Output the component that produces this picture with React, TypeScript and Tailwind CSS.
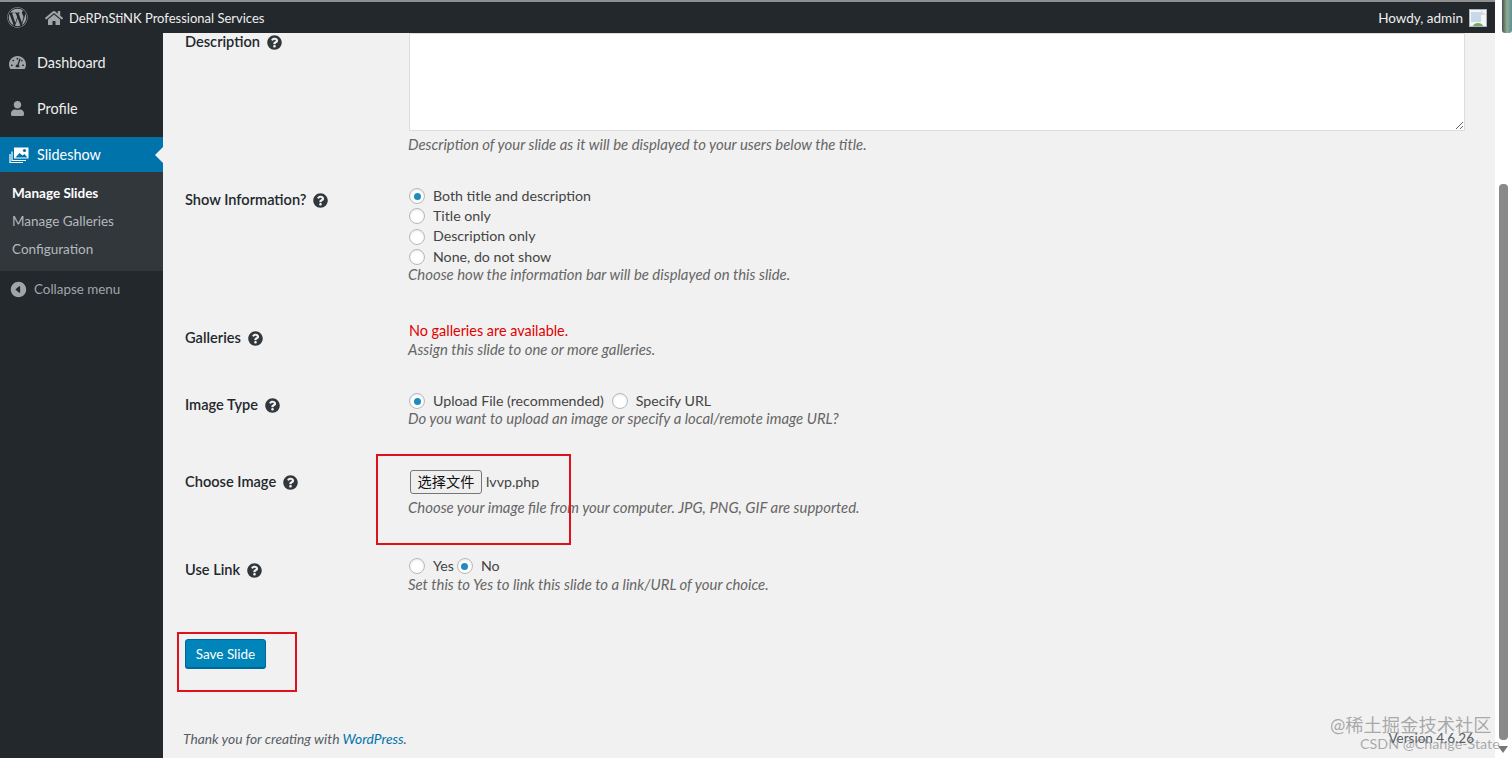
import type { ReactNode } from 'react';
import { FaHome, FaQuestionCircle, FaTachometerAlt, FaUser, FaWordpress } from 'react-icons/fa';
import { IoCaretBackCircle } from 'react-icons/io5';

const font = "font-['Lato','Noto_Sans_CJK_SC',sans-serif]";

function Help() {
  return <FaQuestionCircle className="ml-[7px] h-[15px] w-[15px] text-[#32373c]" />;
}

function Radio({ checked, label }: { checked?: boolean; label: string }) {
  return (
    <span className="flex h-[20.3px] items-center">
      <span className="flex h-4 w-4 items-center justify-center rounded-full border border-[#b4b9be] bg-white shadow-[inset_0_1px_2px_rgba(0,0,0,0.1)]">
        {checked && <span className="h-[7px] w-[7px] rounded-full bg-[#1e8cbe]" />}
      </span>
      <span className="ml-2 pb-px text-[#444]">{label}</span>
    </span>
  );
}

function Hint({ children }: { children: ReactNode }) {
  return <p className="-ml-px h-5 text-[14.9px] leading-5 italic text-[#666]">{children}</p>;
}

function Row({ label, top, labelTop, children }: { label: string; top: string; labelTop: string; children: ReactNode }) {
  return (
    <div className={`grid grid-cols-[224px_1fr] ${top}`}>
      <div className={`flex items-center text-[14.6px] font-semibold text-[#23282d] ${labelTop}`}>
        {label}
        <Help />
      </div>
      <div>{children}</div>
    </div>
  );
}

function SlidesIcon() {
  return (
    <svg className="h-[20px] w-[20px]" viewBox="0 0 20 20" fill="none">
      <path d="M1 9v8.500h13" stroke="#fff" strokeWidth="1.2" />
      <path d="M3 6.500V15.500h14" stroke="#fff" strokeWidth="1.2" />
      <path d="M5 2.500h14.500v11H5z" fill="#fff" />
      <path d="M6.500 12.500l4-4.500 3 2.500 2-1.500 3 3.500z" fill="#0073aa" />
      <circle cx="15.500" cy="5.500" r="1.600" fill="#0073aa" />
    </svg>
  );
}

function Sidebar() {
  return (
    <aside className="flex w-[163px] shrink-0 flex-col bg-[#23282d] text-[14.4px] text-[#eee]">
      <div className="flex h-[46px] items-center pl-[9px] pt-[13px]">
        <FaTachometerAlt className="h-[17px] w-[17px] text-[#a0a5aa]" />
        <span className="ml-[11px]">Dashboard</span>
      </div>
      <div className="flex h-[46px] items-center pl-[10px] pt-[13px]">
        <FaUser className="h-[15px] w-[15px] text-[#a0a5aa]" />
        <span className="ml-3">Profile</span>
      </div>
      <div className="relative mt-[12px] flex h-[35px] items-center bg-[#0073aa] pl-[9px] text-white">
        <SlidesIcon />
        <span className="ml-[8px]">Slideshow</span>
        <span className="absolute right-0 top-[10px] h-0 w-0 border-y-[8px] border-r-[8px] border-y-transparent border-r-[#f1f1f1]" />
      </div>
      <div className="flex h-[99px] flex-col bg-[#32373c] pl-3 pt-[7px] text-[13.5px] text-[#b4b9be]">
        <span className="flex h-7 items-center font-bold text-white">Manage Slides</span>
        <span className="flex h-7 items-center">Manage Galleries</span>
        <span className="flex h-7 items-center">Configuration</span>
      </div>
      <div className="flex h-[36px] items-center pl-[9px] text-[13.4px] text-[#a0a5aa]">
        <IoCaretBackCircle className="h-[19px] w-[19px]" />
        <span className="ml-[6px]">Collapse menu</span>
      </div>
    </aside>
  );
}

export default function App() {
  return (
    <div className={`relative flex h-[758px] w-[1512px] overflow-hidden bg-white text-[14.2px] leading-5 ${font}`}>
      <div className="flex w-[1495px] flex-col">
        <header className="flex h-[33px] shrink-0 items-center border-t-2 border-[#8d8f91] bg-[#23282d] pl-[7px] pr-[8px] text-[13.5px] text-[#eee]">
          <FaWordpress className="h-[21px] w-[21px] text-[#a0a5aa]" />
          <FaHome className="ml-[17px] h-[18px] w-[18px] text-[#a0a5aa]" />
          <span className="ml-[6px] text-[13px]">DeRPnStiNK Professional Services</span>
          <span className="ml-auto">Howdy, admin</span>
          <svg className="ml-[6px] h-[18px] w-[18px]" viewBox="0 0 18 18">
            <rect x="0.5" y="0.5" width="17" height="17" fill="#f4f6f8" stroke="#a9b4bd" />
            <rect x="2" y="3" width="10" height="10" fill="#c7d8e8" />
            <path d="M12 1l5 5h-5z" fill="#d8dde2" />
            <path d="M4 17c1-4 9-4 10 0z" fill="#6ea861" />
          </svg>
        </header>
        <div className="flex min-h-0 flex-1">
          <Sidebar />
          <main className="flex-1 bg-[#f1f1f1] pl-[22px] pr-[30px] text-[#444]">
            <Row label="Description" top="" labelTop="h-5 -mt-px self-start">
              <textarea readOnly className="block h-[98px] w-full border border-[#ddd] bg-white" />
              <div className="mt-[3px]"><Hint>Description of your slide as it will be displayed to your users below the title.</Hint></div>
            </Row>
            <Row label="Show Information?" top="mt-[32px]" labelTop="mt-1 h-5 self-start">
              <div className="flex flex-col">
                <Radio checked label="Both title and description" />
                <Radio label="Title only" />
                <Radio label="Description only" />
                <Radio label="None, do not show" />
              </div>
              <div className="-mt-[3px]"><Hint>Choose how the information bar will be displayed on this slide.</Hint></div>
            </Row>
            <Row label="Galleries" top="mt-[37px]" labelTop="mt-[7px] h-5 self-start">
              <p className="h-[19px] text-[14.4px] text-[#e00000]">No galleries are available.</p>
              <div className="-mt-px"><Hint>Assign this slide to one or more galleries.</Hint></div>
            </Row>
            <Row label="Image Type" top="mt-[33px]" labelTop="mt-[3px] h-5 self-start">
              <div className="flex h-[18px] items-center gap-[8px]">
                <Radio checked label="Upload File (recommended)" />
                <Radio label="Specify URL" />
              </div>
              <div className="-mt-[2px]"><Hint>Do you want to upload an image or specify a local/remote image URL?</Hint></div>
            </Row>
            <Row label="Choose Image" top="mt-[42px]" labelTop="mt-[2px] h-5 self-start">
              <div className="flex h-6 items-center">
                <button className="ml-px flex h-6 w-[72px] items-center justify-center rounded-[3px] border border-[#767676] bg-[#efefef] text-[#111]">选择文件</button>
                <span className="ml-1 text-[#444]">lvvp.php</span>
              </div>
              <div className="mt-[3px]"><Hint>Choose your image file from your computer. JPG, PNG, GIF are supported.</Hint></div>
            </Row>
            <Row label="Use Link" top="mt-[40px]" labelTop="mt-[3px] h-5 self-start">
              <div className="flex h-[18px] items-center gap-[3px]">
                <Radio label="Yes" />
                <Radio checked label="No" />
              </div>
              <div className="-mt-px"><Hint>Set this to Yes to link this slide to a link/URL of your choice.</Hint></div>
            </Row>
            <button className="mt-[45px] flex h-[29px] w-[81px] items-center justify-center rounded-[3px] border border-[#006799] bg-[#0085ba] text-[13.5px] text-white shadow-[0_1px_0_#006799]">
              Save Slide
            </button>
            <div className="-ml-[2px] mt-[61px] flex items-center justify-between text-[13.8px] text-[#555d66]">
              <span className="italic">Thank you for creating with <span className="text-[#0073aa]">WordPress</span>.</span>
              <span className="-mr-[9px] -mt-[2px] text-[13.5px]">Version 4.6.26</span>
            </div>
          </main>
        </div>
      </div>
      <div className="flex w-[17px] flex-col items-start bg-white">
        <div className="ml-[7px] h-[33px] w-[10px] rounded-b-[3px] bg-[linear-gradient(90deg,#4a4f55,#8fae8f_50%,#5a8f9a)]" />
        <div className="ml-[4px] mt-[151px] h-[556px] w-[9px] rounded-[4px] bg-[#8a8a8a]" />
        <div className="ml-[3px] mt-[6px] h-0 w-0 border-x-[5px] border-t-[7px] border-x-transparent border-t-[#777]" />
      </div>

      {/* annotations drawn over the screenshot */}
      <div className="absolute left-[376px] top-[454px] h-[91px] w-[195px] border-2 border-[#e0101c]" />
      <div className="absolute left-[177px] top-[632px] h-[60px] w-[120px] border-2 border-[#e0101c]" />
      <div className="absolute left-[1330px] top-[715px] whitespace-nowrap text-[18.3px] text-[#77777799]">@稀土掘金技术社区</div>
      <div className="absolute left-[1360px] top-[734px] whitespace-nowrap text-[14.3px] text-[#77777799]">CSDN @Change-State</div>
    </div>
  );
}
